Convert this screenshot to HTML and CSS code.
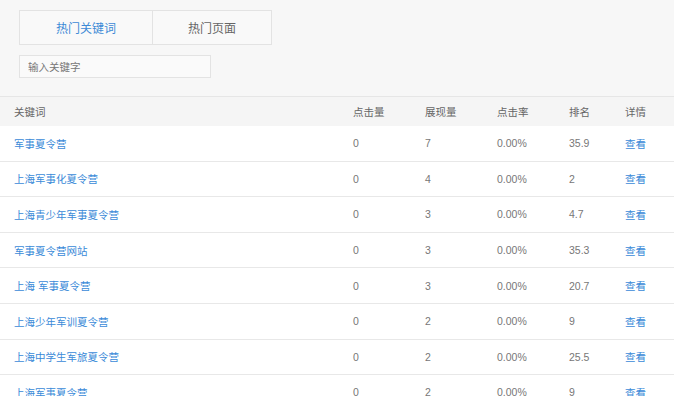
FILE: index.html
```html
<!DOCTYPE html>
<html lang="zh-CN">
<head>
  <meta charset="UTF-8" />
  <meta name="viewport" content="width=device-width, initial-scale=1.0" />
  <title>热门关键词</title>
  <link rel="stylesheet" href="styles.css">
</head>
<body>
  <div id="panel">
    <div class="toolbar">
      <div class="tabs">
        <div class="tab active">热门关键词</div>
        <div class="tab">热门页面</div>
      </div>
      <input class="search" type="text" placeholder="输入关键字" />
    </div>

    <table class="keywords">
      <thead>
        <tr>
          <th class="col-word">关键词</th>
          <th>点击量</th>
          <th>展现量</th>
          <th>点击率</th>
          <th class="col-rank">排名</th>
          <th class="col-more">详情</th>
        </tr>
      </thead>
      <tbody>
        <tr><td><a href="#">军事夏令营</a></td><td>0</td><td>7</td><td>0.00%</td><td>35.9</td><td><a href="#">查看</a></td></tr>
        <tr><td><a href="#">上海军事化夏令营</a></td><td>0</td><td>4</td><td>0.00%</td><td>2</td><td><a href="#">查看</a></td></tr>
        <tr><td><a href="#">上海青少年军事夏令营</a></td><td>0</td><td>3</td><td>0.00%</td><td>4.7</td><td><a href="#">查看</a></td></tr>
        <tr><td><a href="#">军事夏令营网站</a></td><td>0</td><td>3</td><td>0.00%</td><td>35.3</td><td><a href="#">查看</a></td></tr>
        <tr><td><a href="#">上海 军事夏令营</a></td><td>0</td><td>3</td><td>0.00%</td><td>20.7</td><td><a href="#">查看</a></td></tr>
        <tr><td><a href="#">上海少年军训夏令营</a></td><td>0</td><td>2</td><td>0.00%</td><td>9</td><td><a href="#">查看</a></td></tr>
        <tr><td><a href="#">上海中学生军旅夏令营</a></td><td>0</td><td>2</td><td>0.00%</td><td>25.5</td><td><a href="#">查看</a></td></tr>
        <tr><td><a href="#">上海军事夏令营</a></td><td>0</td><td>2</td><td>0.00%</td><td>9</td><td><a href="#">查看</a></td></tr>
      </tbody>
    </table>
  </div>
</body>
</html>
```

FILE: styles.css
```css
body {
  margin: 0;
  background: #fff;
  font-family: "Liberation Sans", "Noto Sans CJK SC", sans-serif;
  color: #666;
  overflow: hidden;
}
#panel {
  width: 674px;
}
.toolbar {
  background: #f7f7f7;
  border-bottom: 1px solid #e6e6e6;
  padding: 10px 19px 0;
  height: 86px;
}
.tabs {
  display: flex;
  width: 253px;
  height: 35px;
  box-sizing: border-box;
  border: 1px solid #e3e3e3;
  background: #f9f9f9;
}
.tab {
  display: flex;
  align-items: center;
  justify-content: center;
  font-size: 12px;
  color: #666;
}
.tab.active {
  width: 132px;
  color: #3d8ad6;
}
.tab + .tab {
  flex: 1;
  border-left: 1px solid #e3e3e3;
}
.search {
  display: block;
  margin-top: 10px;
  width: 192px;
  height: 23px;
  box-sizing: border-box;
  border: 1px solid #e3e3e3;
  background: #fafafa;
  padding: 0 8px;
  font-family: inherit;
  font-size: 10.5px;
  outline: none;
}
.search::placeholder {
  color: #777;
}
.keywords {
  width: 674px;
  border-collapse: collapse;
  table-layout: fixed;
  font-size: 10.5px;
}
.keywords th {
  background: #f5f5f5;
  height: 29px;
  font-weight: normal;
  text-align: left;
  color: #666;
  width: 72px;
  padding: 0;
}
.keywords th.col-word {
  width: 339px;
  padding-left: 14px;
}
.keywords th.col-rank {
  width: 56px;
}
.keywords th.col-more {
  width: 49px;
}
.keywords td {
  height: 34.6px;
  border-bottom: 1px solid #e8e8e8;
  padding: 0;
  color: #777;
}
.keywords td:first-child {
  padding-left: 14px;
}
.keywords a {
  color: #3a8ad8;
  text-decoration: none;
}
```
